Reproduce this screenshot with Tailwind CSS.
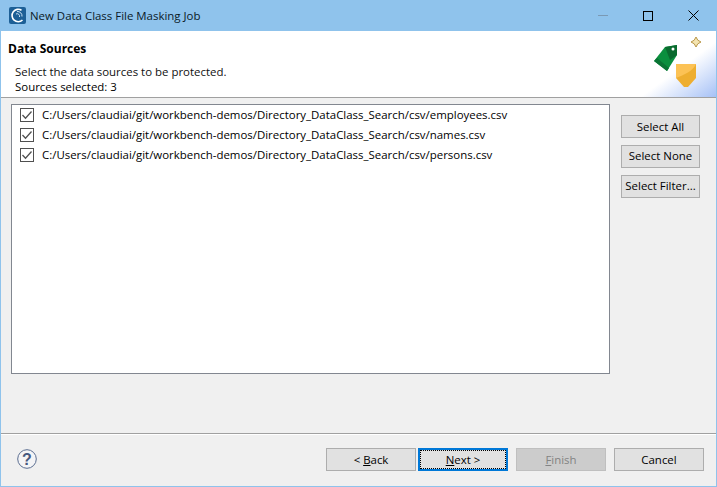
<!DOCTYPE html>
<html><head><meta charset="utf-8"><script src="https://cdn.jsdelivr.net/npm/@tailwindcss/browser@4"></script></head>
<body class="m-0 overflow-hidden">
<div class="w-[717px] h-[487px] flex flex-col bg-[#f0f0f0] border border-t-0 border-[#8fc3ec] text-[11.45px] leading-[15px] text-black font-['Open_Sans','Noto_Sans',sans-serif]">
  <div class="h-[31px] shrink-0 -mx-px bg-[#8fc3ec] flex items-center pl-[9px]">
    <svg class="w-[17px] h-[17px]" viewBox="0 0 17 17"><rect width="17" height="17" rx="2" fill="#1d5f96"/><path d="M12.5 3.2A6.2 6.2 0 1 0 13.5 13" fill="none" stroke="#fff" stroke-width="1.6"/><path d="M8 4.5a4.5 4.5 0 0 1 5 5M7 7a2.5 2.5 0 0 1 3.5 3" fill="none" stroke="#cfe4f4" stroke-width="1"/></svg>
    <span class="ml-[4px] text-[#0a1a28]">New Data Class File Masking Job</span>
    <div class="ml-auto flex items-center">
      <div class="w-[10px] h-px bg-[#7a99b4] mr-[35px]"></div>
      <svg class="w-[10px] h-[10px] mr-[35px]" viewBox="0 0 10 10"><rect x=".5" y=".5" width="9" height="9" fill="none" stroke="#000"/></svg>
      <svg class="w-[11px] h-[11px] mr-[18px]" viewBox="0 0 11 11"><path d="M.5.5l10 10M10.5.5l-10 10" stroke="#000" fill="none"/></svg>
    </div>
  </div>
  <div class="h-[67px] shrink-0 bg-white border-b border-[#a0a0a0] relative pl-[7px] pt-[10px]">
    <div class="absolute right-0 bottom-0 w-[90px] h-[66px] bg-[linear-gradient(to_bottom_right,#ffffff_0%,#ffffff_58%,#a6c1f6_100%)]"></div>
    <div class="font-bold text-[12px]">Data Sources</div>
    <div class="pl-[7px] mt-[8px] text-[#101010]">Select the data sources to be protected.</div>
    <div class="pl-[7px]">Sources selected: 3</div>
    <svg class="absolute right-[14px] top-[4px] w-[52px] h-[55px]" viewBox="650 35 52 55">
      <path d="M654 61L665 47 677 45 677 55 667 71Z" fill="#0b8f3e"/>
      <path d="M665 47L677 45 677 55 670 60Z" fill="#0a6b2f"/>
      <path d="M654 61L667 71 669 68 657 58Z" fill="#0a7434"/>
      <circle cx="673" cy="49" r="1.500" fill="#fff"/>
      <path d="M676 64H696V78L688 87H684L676 78Z" fill="#eeae30"/>
      <path d="M676 64H696C693 71 684 75 676 78Z" fill="#fcc255"/>
      <path d="M696 37l1.800 3.200 3.200 1.800-3.200 1.800-1.800 3.200-1.800-3.200-3.200-1.800 3.200-1.800Z" fill="#f4e4b0" stroke="#b9974a" stroke-width="1"/>
    </svg>
  </div>
  <div class="flex-1 flex min-h-0 pl-[10px] pt-[6px]">
    <div class="w-[599px] h-[270px] bg-white border border-[#828790] pl-[8px]">
      <div class="h-[20px] flex items-center gap-[8px]"><svg class="w-[14px] h-[14px]" viewBox="0 0 14 14"><rect x=".5" y=".5" width="13" height="13" fill="#fff" stroke="#505050"/><path d="M2.500 7l3 3.200 6-6.700" fill="none" stroke="#505050" stroke-width="1.300"/></svg><span class="-mt-px">C:/Users/claudiai/git/workbench-demos/Directory_DataClass_Search/csv/employees.csv</span></div>
      <div class="h-[20px] flex items-center gap-[8px]"><svg class="w-[14px] h-[14px]" viewBox="0 0 14 14"><rect x=".5" y=".5" width="13" height="13" fill="#fff" stroke="#505050"/><path d="M2.500 7l3 3.200 6-6.700" fill="none" stroke="#505050" stroke-width="1.300"/></svg><span class="-mt-px">C:/Users/claudiai/git/workbench-demos/Directory_DataClass_Search/csv/names.csv</span></div>
      <div class="h-[20px] flex items-center gap-[8px]"><svg class="w-[14px] h-[14px]" viewBox="0 0 14 14"><rect x=".5" y=".5" width="13" height="13" fill="#fff" stroke="#505050"/><path d="M2.500 7l3 3.200 6-6.700" fill="none" stroke="#505050" stroke-width="1.300"/></svg><span class="-mt-px">C:/Users/claudiai/git/workbench-demos/Directory_DataClass_Search/csv/persons.csv</span></div>
    </div>
    <div class="ml-[11px] pt-[11px] flex flex-col gap-[7px]">
      <button class="w-[79px] h-[23px] bg-[#e1e1e1] border border-[#adadad] text-center">Select All</button>
      <button class="w-[79px] h-[23px] bg-[#e1e1e1] border border-[#adadad] text-center pb-[2px]">Select None</button>
      <button class="w-[79px] h-[23px] bg-[#e1e1e1] border border-[#adadad] text-center pb-[2px]">Select Filter...</button>
    </div>
  </div>
  <div class="h-[53px] shrink-0 border-t border-[#a0a0a0] shadow-[inset_0_1px_0_#fff] flex items-center pl-[16px] pr-[12px] pb-[1px]">
    <svg class="w-[20px] h-[20px] -mt-[1px]" viewBox="0 0 20 20"><circle cx="10" cy="10" r="9.300" fill="#f4f4f6" stroke="#5a6d90" stroke-width="1"/><text x="10" y="15.800" text-anchor="middle" font-size="16" font-weight="700" fill="#46587e" font-family="Liberation Sans">?</text></svg>
    <div class="ml-auto flex">
      <button class="w-[90px] h-[23px] bg-[#e1e1e1] border border-[#adadad]">&lt; <span class="underline">B</span>ack</button>
      <button class="ml-[2px] w-[90px] h-[23px] bg-[#e1e1e1] border-2 border-[#0078d7] outline-1 outline-dotted outline-black -outline-offset-3"><span class="underline">N</span>ext &gt;</button>
      <button class="ml-[8px] w-[90px] h-[23px] bg-[#cccccc] border border-[#bfbfbf] text-[#838383]"><span class="underline">F</span>inish</button>
      <button class="ml-[8px] w-[90px] h-[23px] bg-[#e1e1e1] border border-[#adadad]">Cancel</button>
    </div>
  </div>
</div>
</body></html>
